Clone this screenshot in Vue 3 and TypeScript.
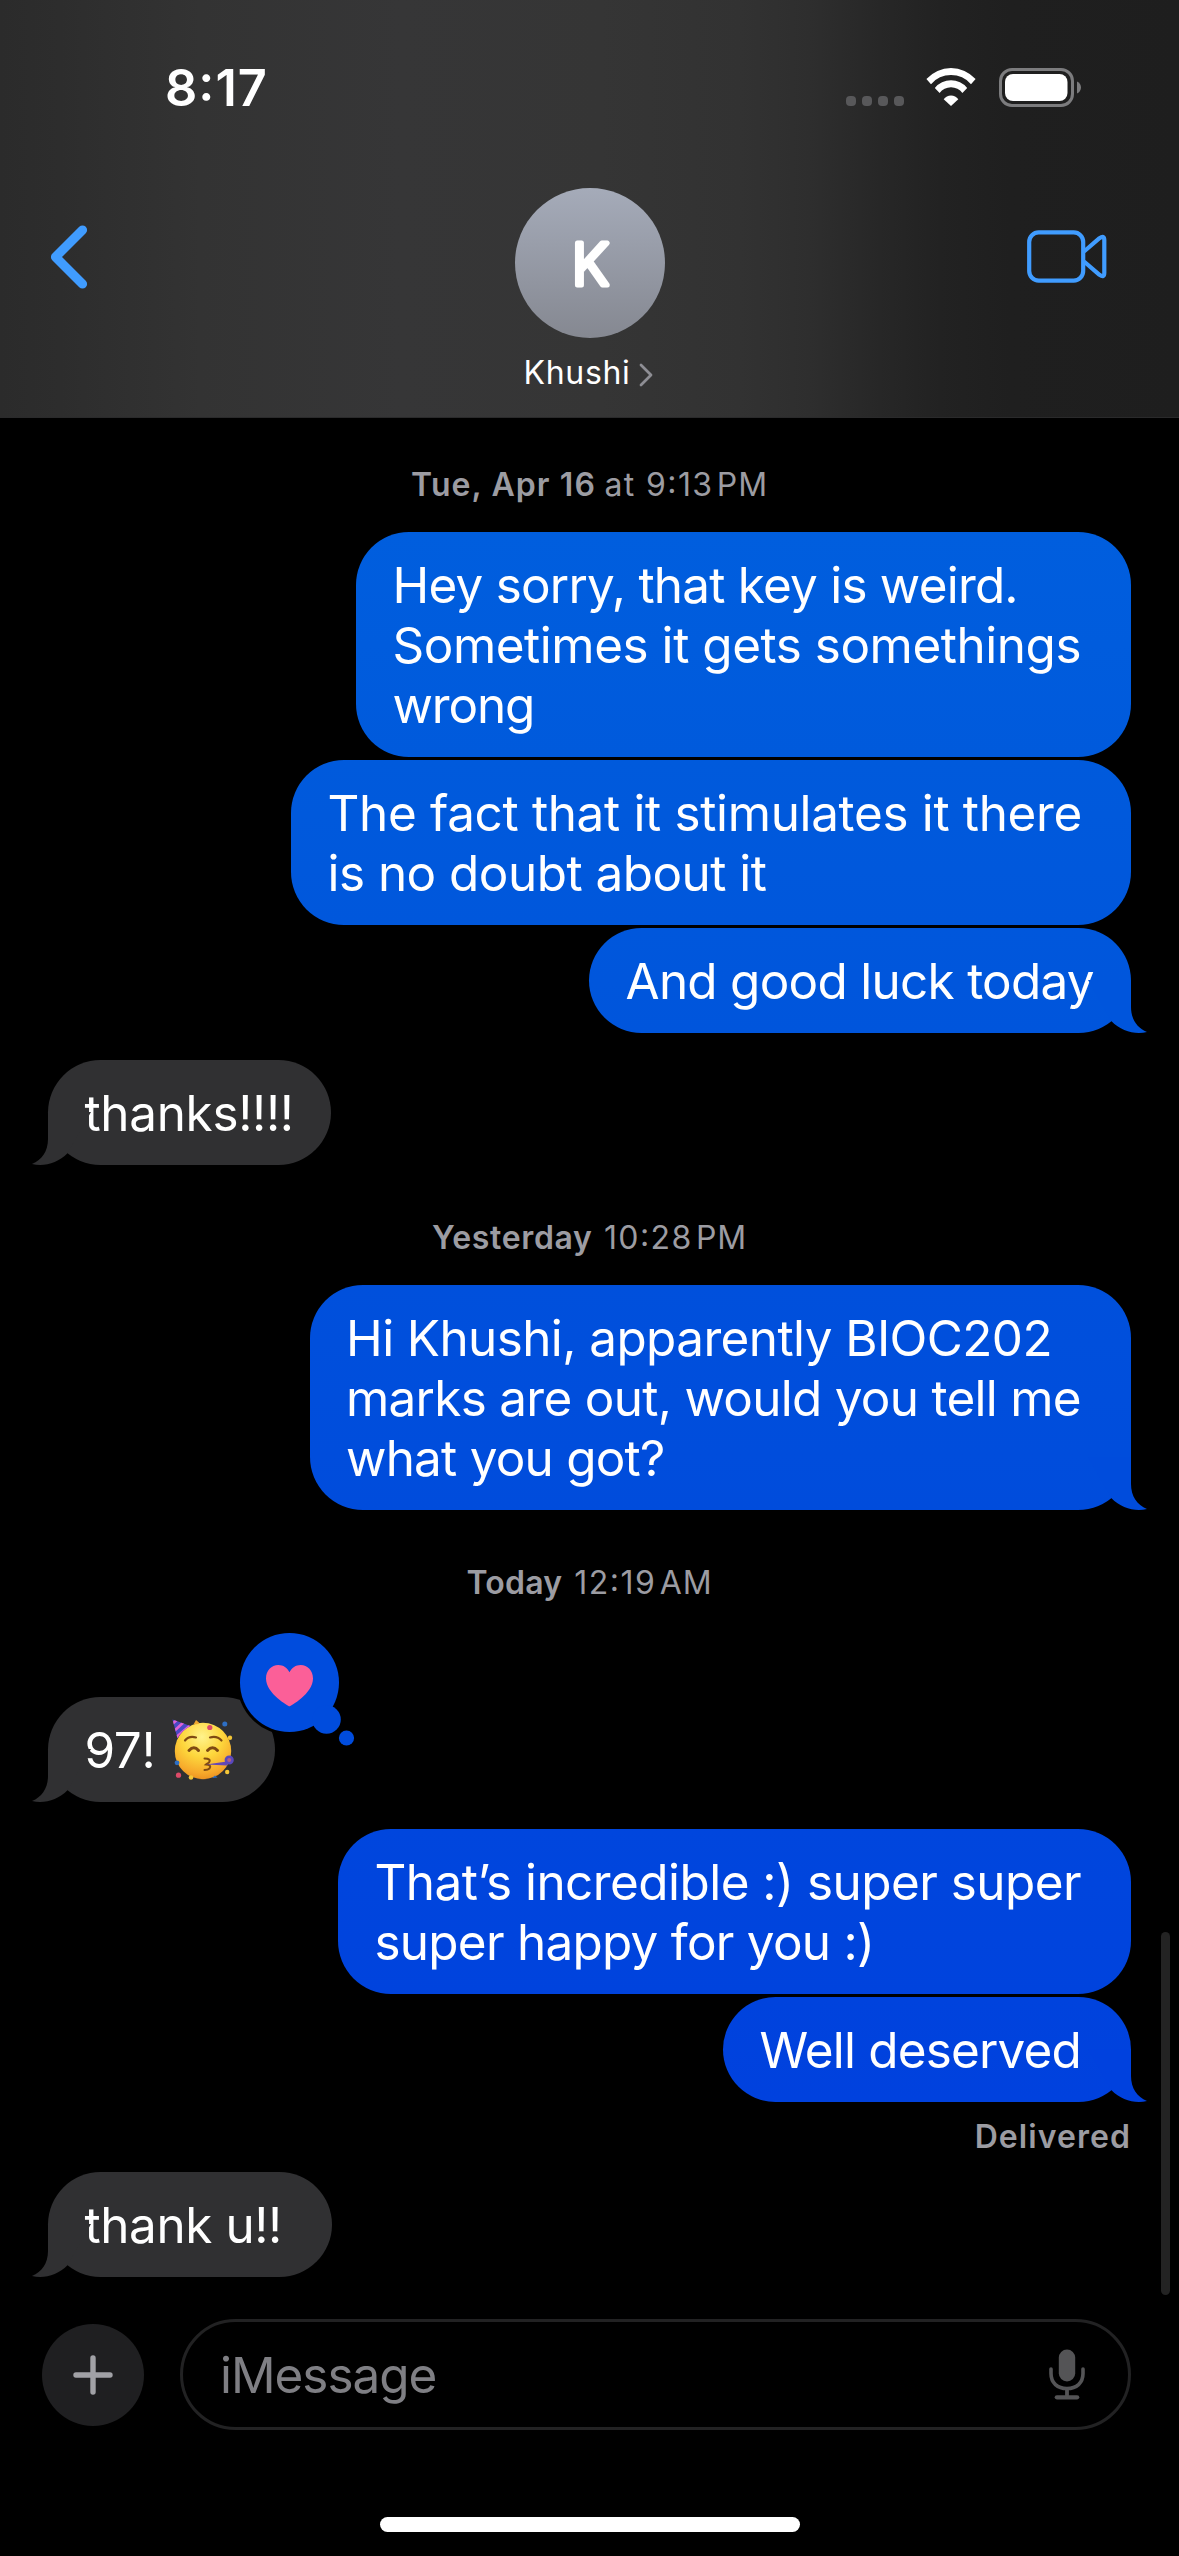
<script setup lang="ts">
interface Line {
  text: string
  spacing: number
}
interface Stamp {
  kind: 'stamp'
  day: string
  daySpacing: number
  gap: number
  time: string
  timeSpacing: number
  meridiem: string
}
interface Message {
  kind: 'message'
  from: 'me' | 'them'
  width: number
  lines: Line[]
  top: string
  bottom: string
  tail?: boolean
  follows?: boolean
  reaction?: boolean
  emoji?: boolean
  status?: string
}
type Entry = Stamp | Message

const grey = '#303032'

const entries: Entry[] = [
  { kind: 'stamp', day: 'Tue, Apr 16', daySpacing: 1.1, gap: -2, time: 'at 9:13', timeSpacing: 1.4, meridiem: 'PM' },
  {
    kind: 'message', from: 'me', width: 775, top: '#005ede', bottom: '#005adc',
    lines: [
      { text: 'Hey sorry, that key is weird.', spacing: -0.76 },
      { text: 'Sometimes it gets somethings', spacing: -0.44 },
      { text: 'wrong', spacing: -1.1 },
    ],
  },
  {
    kind: 'message', from: 'me', width: 840, top: '#005adc', bottom: '#0057dc', follows: true,
    lines: [
      { text: 'The fact that it stimulates it there', spacing: -0.32 },
      { text: 'is no doubt about it', spacing: -0.5 },
    ],
  },
  {
    kind: 'message', from: 'me', width: 542, top: '#0057dc', bottom: '#0055dc', follows: true, tail: true,
    lines: [{ text: 'And good luck today', spacing: -0.7 }],
  },
  {
    kind: 'message', from: 'them', width: 283, top: grey, bottom: grey, tail: true,
    lines: [{ text: 'thanks!!!!', spacing: -0.3 }],
  },
  { kind: 'stamp', day: 'Yesterday', daySpacing: 0.65, gap: 1, time: '10:28', timeSpacing: 1.39, meridiem: 'PM' },
  {
    kind: 'message', from: 'me', width: 821.5, top: '#0050dc', bottom: '#004cdc', tail: true,
    lines: [
      { text: 'Hi Khushi, apparently BIOC202', spacing: -0.57 },
      { text: 'marks are out, would you tell me', spacing: -0.69 },
      { text: 'what you got?', spacing: -0.75 },
    ],
  },
  { kind: 'stamp', day: 'Today', daySpacing: 0.2, gap: 1.5, time: '12:19', timeSpacing: 1.5, meridiem: 'AM' },
  {
    kind: 'message', from: 'them', width: 227, top: grey, bottom: grey, tail: true, reaction: true, emoji: true,
    lines: [{ text: '97!', spacing: -0.3 }],
  },
  {
    kind: 'message', from: 'me', width: 793, top: '#0046dd', bottom: '#0043dd',
    lines: [
      { text: 'That’s incredible :) super super', spacing: -0.51 },
      { text: 'super happy for you :)', spacing: -0.72 },
    ],
  },
  {
    kind: 'message', from: 'me', width: 408, top: '#0043dd', bottom: '#0041de', follows: true, tail: true, status: 'Delivered',
    lines: [{ text: 'Well deserved', spacing: -0.8 }],
  },
  {
    kind: 'message', from: 'them', width: 284, top: grey, bottom: grey, tail: true,
    lines: [{ text: 'thank u!!', spacing: -0.4 }],
  },
]
</script>

<template>
  <div class="phone">
    <header class="header">
      <div class="status">
        <span class="clock">8:17</span>
        <div class="indicators">
          <div class="cellular"><i></i><i></i><i></i><i></i></div>
          <svg class="wifi" width="50" height="39" viewBox="0 0 50 39" fill="#fff">
            <path d="M.4 11A33.2 33.2 0 0 1 49.6 11L45 16.2A26.2 26.2 0 0 0 5 16.2Z" />
            <path d="M8.8 20A21 21 0 0 1 41.2 20L36.4 25A14.1 14.1 0 0 0 13.6 25Z" />
            <path d="M17.7 31.3A9 9 0 0 1 32.3 31.3L25 38Z" />
          </svg>
          <svg class="battery" width="83" height="39" viewBox="0 0 83 39">
            <rect x="1.5" y="1.5" width="72" height="36" rx="11.5" fill="none" stroke="#7c7c7e" stroke-width="3" />
            <rect x="6" y="6" width="62.5" height="27" rx="8" fill="#fff" />
            <path d="M78 13.5C80.6 14.6 82 17 82 19.5S80.6 24.4 78 25.5Z" fill="#7c7c7e" />
          </svg>
        </div>
      </div>
      <nav class="nav">
        <svg class="back" width="40" height="66" viewBox="0 0 40 66" fill="none" stroke="#409cff" stroke-width="9.2" stroke-linecap="round" stroke-linejoin="round">
          <path d="M32.5 6L5.5 33 32.5 60" />
        </svg>
        <div class="contact">
          <svg class="avatar" width="150" height="150" viewBox="0 0 150 150">
            <defs>
              <linearGradient id="avatar-fill" x1="0" y1="0" x2="0" y2="1">
                <stop offset="0" stop-color="#a5abb9" />
                <stop offset="1" stop-color="#858891" />
              </linearGradient>
            </defs>
            <circle cx="75" cy="75" r="75" fill="url(#avatar-fill)" />
            <text class="initial" x="57" y="97">K</text>
          </svg>
          <div class="name">
            <span>Khushi</span>
            <svg width="14" height="24" viewBox="0 0 14 24" fill="none" stroke="#8e8e94" stroke-width="2.8" stroke-linecap="round" stroke-linejoin="round">
              <path d="M2 2L12 12 2 22" />
            </svg>
          </div>
        </div>
        <svg class="video" width="81" height="55" viewBox="0 0 81 55" fill="none" stroke="#409cff" stroke-width="4.2" stroke-linejoin="round">
          <rect x="3.2" y="3.4" width="54" height="48.2" rx="9.5" />
          <path d="M58 22.5L73.5 9.2Q78.3 6 78.3 11V44Q78.3 49 73.5 45.8L58 32.5" />
        </svg>
      </nav>
    </header>

    <main class="thread">
      <template v-for="(e, i) in entries" :key="i">
        <div v-if="e.kind === 'stamp'" class="stamp">
          <b :style="{ letterSpacing: e.daySpacing + 'px' }">{{ e.day }}</b><span :style="{ letterSpacing: e.timeSpacing + 'px', marginLeft: e.gap + 'px' }">{{ ' ' + e.time }}</span><span class="meridiem">{{ ' ' + e.meridiem }}</span>
        </div>
        <div v-else class="row" :class="[e.from, { follows: e.follows, reacted: e.reaction }]">
          <div class="bubble" :style="{ width: e.width + 'px', background: `linear-gradient(${e.top}, ${e.bottom})` }">
            <div v-for="line in e.lines" :key="line.text" class="line">
              <span :style="{ letterSpacing: line.spacing + 'px' }">{{ line.text }}</span>
              <svg v-if="e.emoji" class="emoji" width="64" height="64" viewBox="0 0 64 64" role="img" aria-label="🥳">
                <defs>
                  <radialGradient id="face" cx=".48" cy=".25" r=".8">
                    <stop offset="0" stop-color="#fff38c" />
                    <stop offset=".45" stop-color="#fdd63c" />
                    <stop offset=".8" stop-color="#f7a92b" />
                    <stop offset="1" stop-color="#e88a1e" />
                  </radialGradient>
                  <clipPath id="hat"><path d="M1.5 2.5L19.5 9Q11 13 6.5 21.5Z" /></clipPath>
                </defs>
                <circle cx="32" cy="34" r="28.2" fill="url(#face)" />
                <g clip-path="url(#hat)">
                  <path d="M0 0H22V24H0Z" fill="#4a49c4" />
                  <path d="M-1 9L9 0M1 16L15 3M3 22L22 6" stroke="#df62d4" stroke-width="2.6" />
                </g>
                <g fill="none" stroke="#7f4a12" stroke-linecap="round">
                  <path d="M14 23.5Q18 18.5 25 20.5M39 20.5Q46 18.5 50.5 23.5" stroke-width="2.2" />
                  <path d="M18 33.5Q23 28 27.5 33.5M36.5 33.5Q41.5 28 46.5 33.5" stroke-width="3" />
                  <path d="M33.5 41.5Q40.5 41.5 38 45.5 35.5 47 35 47.5 41 48 38.5 51.5 37 53 33.5 53" stroke-width="2" />
                </g>
                <path d="M35 47.5L56 44.5 56.5 48.5Z" fill="#6547b5" />
                <circle cx="58.2" cy="43" r="3.3" fill="#b05f86" stroke="#5a48bd" stroke-width="2.6" />
                <g fill="#dc4a68"><circle cx="38.8" cy="10.5" r="2.6" /><circle cx="7.5" cy="58.2" r="2.6" /></g>
                <g fill="#2e6fc4"><circle cx="53.8" cy="7" r="2.5" /><circle cx="6" cy="45.8" r="2.4" /><path d="M41 61L44 58.5 46.5 60.5Z" /></g>
                <g fill="#f4c637"><circle cx="59" cy="20.8" r="2.2" /><circle cx="20" cy="60.5" r="2.3" /><circle cx="56.2" cy="55" r="2.2" /></g>
                <path d="M22.5 7.5L25 3 28 5.5 27.5 7Z" fill="#eea82e" />
              </svg>
            </div>
            <svg v-if="e.tail" class="tail" width="62" height="53" viewBox="0 0 62 53" :fill="e.bottom">
              <path d="M17 0V27C17 39 11 48 1 52 13 55 27 51 36.5 41.2L60 0Z" />
            </svg>
            <svg v-if="e.reaction" class="reaction" width="120" height="118" viewBox="0 0 120 118">
              <g fill="#000"><circle cx="52.5" cy="52.5" r="52.5" /><circle cx="89.5" cy="89.5" r="17.3" /></g>
              <g fill="#004cdd"><circle cx="52.5" cy="52.5" r="49.5" /><circle cx="89.5" cy="89.5" r="14.3" /><circle cx="109.5" cy="108" r="7.6" /></g>
              <path d="M52.5 76.3C51.5 76.3 29 63.5 29 48.5 29 40.5 34.5 35 41.3 35 46.3 35 50.3 37.8 52.5 42.3 54.7 37.8 58.7 35 63.7 35 70.5 35 76 40.5 76 48.5 76 63.5 53.5 76.3 52.5 76.3Z" fill="#fb5f98" />
            </svg>
          </div>
          <div v-if="e.status" class="receipt">{{ e.status }}</div>
        </div>
      </template>
    </main>

    <footer class="composer">
      <div class="plus">
        <svg width="40" height="40" viewBox="0 0 40 40" stroke="#a1a1a6" stroke-width="5.4" stroke-linecap="round">
          <path d="M20 3V37M3 20H37" />
        </svg>
      </div>
      <div class="field">
        <span>iMessage</span>
        <svg width="36" height="51" viewBox="0 0 36 51" fill="none" stroke="#545456" stroke-linecap="round">
          <rect x="9.8" y=".5" width="16.4" height="32" rx="8.2" fill="#545456" stroke="none" />
          <path d="M2 20V24.5C2 34 8.5 39.5 18 39.5S34 34 34 24.5V20" stroke-width="3.6" />
          <path d="M18 40V47" stroke-width="3.8" stroke-linecap="butt" />
          <path d="M7.800 48.300H28.200" stroke-width="4.200" />
        </svg>
      </div>
    </footer>
    <div class="home"></div>
    <div class="scrollbar"></div>
  </div>
</template>

<style>
html,
body {
  margin: 0;
  background: #000;
}
</style>

<style scoped>
.phone {
  position: relative;
  width: 1179px;
  height: 2556px;
  overflow: hidden;
  background: #000;
  color: #fff;
  font-family: "Inter", "Liberation Sans", sans-serif;
  display: flex;
  flex-direction: column;
}
svg {
  display: block;
  flex: none;
}
.header {
  height: 418px;
  flex: none;
  box-sizing: border-box;
  padding-top: 58px;
  border-bottom: 1px solid #2a2a2b;
  background: linear-gradient(90deg, #2b2b2b 0, #2d2d2d 60px, #333 200px, #363637 400px, #353535 600px, #323232 740px, #2e2e2e 810px, #272727 880px, #222 940px, #1f1f1f 1010px, #1e1e1e 1179px);
}
.status {
  height: 60px;
  display: flex;
  justify-content: space-between;
  padding: 0 97px 0 165px;
}
.clock {
  font-size: 50.5px;
  font-weight: 580;
  line-height: 60px;
  letter-spacing: 1px;
  font-feature-settings: "calt" 1;
}
.indicators {
  display: flex;
  padding-top: 10px;
}
.cellular {
  display: flex;
  gap: 6px;
  padding-top: 28px;
  margin-right: 22px;
}
.cellular i {
  width: 10px;
  height: 10px;
  border-radius: 4px;
  background: #58585a;
}
.wifi {
  margin-right: 23px;
}
.nav {
  display: flex;
  justify-content: space-between;
}
.back {
  margin: 106px 57px 0 50px;
}
.contact {
  margin-top: 70px;
  display: flex;
  flex-direction: column;
  align-items: center;
}
.initial {
  font-family: "Inter", sans-serif;
  font-size: 57px;
  font-weight: 300;
  fill: #fff;
  stroke: #fff;
  stroke-width: 5px;
  stroke-linejoin: round;
}
.name {
  margin-top: 15px;
  margin-left: -2px;
  display: flex;
  align-items: center;
  gap: 9px;
  font-size: 32px;
  line-height: 40px;
  letter-spacing: 0.67px;
}
.name svg {
  margin-top: 3px;
}
.video {
  margin: 111px 72px 0 -6px;
}
.thread {
  padding: 0 48px;
  display: flex;
  flex-direction: column;
}
.stamp {
  margin: 53px 0 0;
  text-align: center;
  white-space: pre;
  font-size: 32px;
  line-height: 40px;
  color: #9c9ca2;
  font-feature-settings: "calt" 1;
}
.stamp:first-child {
  margin-top: 47px;
}
.stamp b {
  font-weight: 560;
}
.meridiem {
  word-spacing: -6.6px;
  letter-spacing: 0.9px;
}
.row {
  margin-top: 27px;
  display: flex;
  flex-direction: column;
  align-items: flex-start;
}
.stamp + .row {
  margin-top: 27px;
}
.row.me {
  align-items: flex-end;
}
.row.follows {
  margin-top: 3px;
}
.stamp + .row.reacted {
  margin-top: 94px;
}
.bubble {
  position: relative;
  box-sizing: border-box;
  padding: 22.5px 0 22.5px 36.5px;
  border-radius: 53px;
  font-size: 49.4px;
  line-height: 60px;
}
.line {
  height: 60px;
  display: flex;
  white-space: nowrap;
}
.emoji {
  margin: -3px 0 0 16px;
}
.tail {
  position: absolute;
  left: -17px;
  bottom: 0;
}
.me .tail {
  left: auto;
  right: -17px;
  transform: scaleX(-1);
}
.reaction {
  position: absolute;
  left: 189px;
  top: -67px;
}
.receipt {
  margin: 15px 0 -12px;
  font-size: 32px;
  font-weight: 560;
  line-height: 40px;
  letter-spacing: 1.06px;
  color: #9c9ca2;
}
.composer {
  margin-top: 42px;
  display: flex;
  align-items: center;
  gap: 36px;
  padding: 0 48px 0 42px;
}
.plus {
  width: 102px;
  height: 102px;
  flex: none;
  border-radius: 50%;
  background: #1f1f21;
  display: flex;
  align-items: center;
  justify-content: center;
}
.field {
  flex: 1;
  height: 111px;
  box-sizing: border-box;
  border: 3px solid #222223;
  border-radius: 56px;
  padding: 0 43px 0 37px;
  display: flex;
  align-items: center;
  justify-content: space-between;
  font-size: 49.4px;
  line-height: 60px;
  letter-spacing: -1px;
  color: #7f7f84;
}
.home {
  width: 420px;
  height: 15px;
  margin: 87px auto 0;
  border-radius: 8px;
  background: #fff;
}
.scrollbar {
  position: absolute;
  right: 9px;
  top: 1932px;
  width: 9px;
  height: 363px;
  border-radius: 5px;
  background: #232323;
}
</style>
